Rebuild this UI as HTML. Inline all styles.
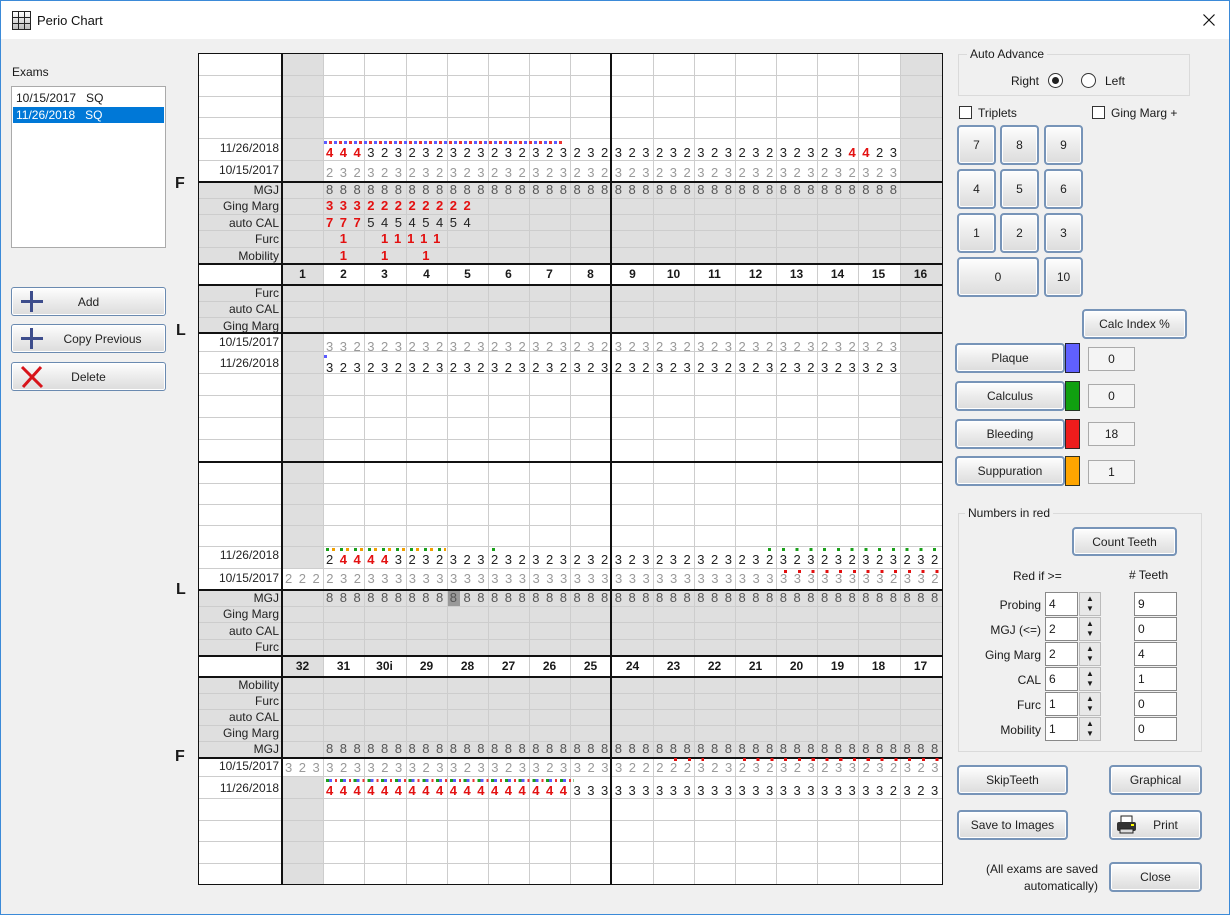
<!DOCTYPE html>
<html><head><meta charset="utf-8"><style>
*{margin:0;padding:0;box-sizing:border-box}
body{width:1230px;height:915px;background:#f0f0f0;position:relative;overflow:hidden;font-family:"Liberation Sans",sans-serif;font-size:12px;color:#1a1a1a;border:1px solid #3b8ad8}
div,span.a{position:absolute}
.tb{left:0;top:0;width:1228px;height:38px;background:#fff}
.g{background:#dfdfdf}
.w{background:#fff}
.h{height:1px;background:#cdcdcd;left:198px;width:743px}
.H{height:2px;background:#111;left:198px;width:743px}
.v{width:1px;background:#cdcdcd;top:53px;height:830px}
.V{width:2px;background:#111;top:53px;height:830px}
.lb{left:198px;width:80px;text-align:right;height:16px;line-height:16px;font-size:12px;color:#222}
.d{font-size:13px;letter-spacing:6.52px;white-space:nowrap;line-height:16px;height:16px;color:#222}
.d r{color:#e31010;font-weight:bold}
.d i{color:transparent;font-style:normal}
.o{color:#999}
.m{color:#555}
.tn{height:20px;line-height:20px;text-align:center;font-weight:bold;font-size:12px;width:41px}
.btn{border:1px solid #6a8ab0;border-radius:3px;background:linear-gradient(#fefefe,#ececec 50%,#dcdcdc);box-shadow:inset 0 0 0 1px #fff;display:flex;align-items:center;justify-content:center;font-size:12px;color:#222}
.np{border:2px solid #7794b8;border-radius:4px}
.box{background:#f4f4f4;border:1px solid #aaa;display:flex;align-items:center;justify-content:center;font-size:12px}
.tx{background:#fff;border:1px solid #888;padding-left:3px;font-size:12px;line-height:22px}
.grp{border:1px solid #dadada}
.gl{background:#f0f0f0;padding:0 3px;font-size:12px}
.dots{height:3px}
.sp{width:22px;height:24px;border:1px solid #bbb;background:#e8e8e8}
</style></head><body>
<div class="tb"></div>
<div style="left:11px;top:10px;width:19px;height:19px;background:#222"></div>
<div style="left:12px;top:11px;width:17px;height:17px;background:linear-gradient(90deg,transparent 5px,#222 5px 6px,transparent 6px 11px,#222 11px 12px,transparent 12px),linear-gradient(transparent 5px,#222 5px 6px,transparent 6px 11px,#222 11px 12px,transparent 12px),linear-gradient(#fff,#bbb)"></div>
<div style="left:36px;top:12px;font-size:13px;color:#111">Perio Chart</div>
<svg style="position:absolute;left:1202px;top:13px" width="12" height="12"><path d="M0.5 0.5 L11.5 11.5 M11.5 0.5 L0.5 11.5" stroke="#111" stroke-width="1.2" fill="none"/></svg>

<!-- left -->
<div style="left:11px;top:64px">Exams</div>
<div style="left:10px;top:85px;width:155px;height:162px;background:#fff;border:1px solid #aaa"></div>
<div style="left:15px;top:90px;line-height:15px">10/15/2017&nbsp;&nbsp;&nbsp;SQ</div>
<div style="left:12px;top:106px;width:151px;height:16px;background:#0078d7;color:#fff;padding-left:3px;line-height:16px">11/26/2018&nbsp;&nbsp;&nbsp;SQ</div>
<div class="btn" style="left:10px;top:286px;width:155px;height:29px">Add</div>
<div class="btn" style="left:10px;top:323px;width:155px;height:29px;padding-left:28px">Copy Previous</div>
<div class="btn" style="left:10px;top:361px;width:155px;height:29px">Delete</div>
<div style="left:20px;top:299px;width:22px;height:3px;background:#3d4d8c"></div><div style="left:29px;top:290px;width:3px;height:21px;background:#3d4d8c"></div>
<div style="left:20px;top:336px;width:22px;height:3px;background:#3d4d8c"></div><div style="left:29px;top:327px;width:3px;height:21px;background:#3d4d8c"></div>
<svg style="position:absolute;left:18px;top:364px" width="26" height="24"><path d="M3 2 L23 22 M22 2 L4 22" stroke="#d8141a" stroke-width="3" fill="none"/></svg>
<div style="left:174px;top:174px;font-weight:bold;font-size:16px">F</div>
<div style="left:175px;top:321px;font-weight:bold;font-size:16px">L</div>
<div style="left:175px;top:580px;font-weight:bold;font-size:16px">L</div>
<div style="left:174px;top:747px;font-weight:bold;font-size:16px">F</div>

<!-- grid bg -->
<div class="w" style="left:198px;top:53px;width:743px;height:830px"></div>
<div class="g" style="left:281px;top:53px;width:41px;height:128px"></div>
<div class="g" style="left:899px;top:53px;width:42px;height:128px"></div>
<div class="g" style="left:281px;top:331px;width:41px;height:130px"></div>
<div class="g" style="left:899px;top:331px;width:42px;height:130px"></div>
<div class="g" style="left:281px;top:461px;width:41px;height:106px"></div>
<div class="g" style="left:281px;top:775px;width:41px;height:108px"></div>
<div class="g" style="left:198px;top:181px;width:743px;height:81px"></div>
<div class="g" style="left:198px;top:284px;width:743px;height:47px"></div>
<div class="g" style="left:198px;top:589px;width:743px;height:65px"></div>
<div class="g" style="left:198px;top:676px;width:743px;height:80px"></div>
<div class="g" style="left:281px;top:263px;width:41px;height:20px"></div>
<div class="g" style="left:899px;top:263px;width:42px;height:20px"></div>
<div class="g" style="left:281px;top:655px;width:41px;height:20px"></div>
<div style="left:446px;top:589px;width:13px;height:16px;background:#999"></div>
<!-- thin horizontals -->
<div class="h" style="top:74px"></div><div class="h" style="top:95px"></div><div class="h" style="top:116px"></div><div class="h" style="top:137px"></div><div class="h" style="top:159px"></div>
<div class="h" style="top:197px"></div><div class="h" style="top:213px"></div><div class="h" style="top:229px"></div><div class="h" style="top:246px"></div>
<div class="h" style="top:300px"></div><div class="h" style="top:316px"></div>
<div class="h" style="top:350px"></div><div class="h" style="top:372px"></div><div class="h" style="top:394px"></div><div class="h" style="top:416px"></div><div class="h" style="top:438px"></div>
<div class="h" style="top:482px"></div><div class="h" style="top:503px"></div><div class="h" style="top:524px"></div><div class="h" style="top:545px"></div><div class="h" style="top:567px"></div>
<div class="h" style="top:605px"></div><div class="h" style="top:621px"></div><div class="h" style="top:638px"></div>
<div class="h" style="top:692px"></div><div class="h" style="top:708px"></div><div class="h" style="top:724px"></div><div class="h" style="top:740px"></div>
<div class="h" style="top:775px"></div><div class="h" style="top:797px"></div><div class="h" style="top:819px"></div><div class="h" style="top:840px"></div><div class="h" style="top:862px"></div>
<!-- thin verticals -->
<div class="v" style="left:322px"></div><div class="v" style="left:363px"></div><div class="v" style="left:405px"></div><div class="v" style="left:446px"></div><div class="v" style="left:487px"></div><div class="v" style="left:528px"></div><div class="v" style="left:569px"></div>
<div class="v" style="left:652px"></div><div class="v" style="left:693px"></div><div class="v" style="left:734px"></div><div class="v" style="left:775px"></div><div class="v" style="left:816px"></div><div class="v" style="left:857px"></div><div class="v" style="left:899px"></div>
<!-- thick -->
<div class="H" style="top:180px"></div><div class="H" style="top:262px"></div><div class="H" style="top:283px"></div><div class="H" style="top:331px"></div><div class="H" style="top:460px"></div>
<div class="H" style="top:588px"></div><div class="H" style="top:654px"></div><div class="H" style="top:675px"></div><div class="H" style="top:756px"></div>
<div class="V" style="left:280px"></div><div class="V" style="left:609px"></div>
<div style="left:197px;top:52px;width:745px;height:832px;border:1px solid #111"></div>

<!-- labels -->
<div class="lb" style="top:139px">11/26/2018</div>
<div class="lb" style="top:161px">10/15/2017</div>
<div class="lb" style="top:181px">MGJ</div>
<div class="lb" style="top:197px">Ging Marg</div>
<div class="lb" style="top:214px">auto CAL</div>
<div class="lb" style="top:230px">Furc</div>
<div class="lb" style="top:247px">Mobility</div>
<div class="lb" style="top:284px">Furc</div>
<div class="lb" style="top:300px">auto CAL</div>
<div class="lb" style="top:317px;height:14px;overflow:hidden">Ging Marg</div>
<div class="lb" style="top:333px">10/15/2017</div>
<div class="lb" style="top:354px">11/26/2018</div>
<div class="lb" style="top:546px">11/26/2018</div>
<div class="lb" style="top:569px">10/15/2017</div>
<div class="lb" style="top:589px">MGJ</div>
<div class="lb" style="top:605px">Ging Marg</div>
<div class="lb" style="top:622px">auto CAL</div>
<div class="lb" style="top:638px">Furc</div>
<div class="lb" style="top:676px">Mobility</div>
<div class="lb" style="top:692px">Furc</div>
<div class="lb" style="top:708px">auto CAL</div>
<div class="lb" style="top:724px">Ging Marg</div>
<div class="lb" style="top:740px">MGJ</div>
<div class="lb" style="top:757px">10/15/2017</div>
<div class="lb" style="top:779px">11/26/2018</div>

<!-- tooth numbers -->
<div class="tn" style="left:281px;top:263px">1</div><div class="tn" style="left:322px;top:263px">2</div><div class="tn" style="left:363px;top:263px">3</div><div class="tn" style="left:405px;top:263px">4</div><div class="tn" style="left:446px;top:263px">5</div><div class="tn" style="left:487px;top:263px">6</div><div class="tn" style="left:528px;top:263px">7</div><div class="tn" style="left:569px;top:263px">8</div><div class="tn" style="left:611px;top:263px">9</div><div class="tn" style="left:652px;top:263px">10</div><div class="tn" style="left:693px;top:263px">11</div><div class="tn" style="left:734px;top:263px">12</div><div class="tn" style="left:775px;top:263px">13</div><div class="tn" style="left:816px;top:263px">14</div><div class="tn" style="left:857px;top:263px">15</div><div class="tn" style="left:899px;top:263px">16</div>
<div class="tn" style="left:281px;top:655px">32</div><div class="tn" style="left:322px;top:655px">31</div><div class="tn" style="left:363px;top:655px">30i</div><div class="tn" style="left:405px;top:655px">29</div><div class="tn" style="left:446px;top:655px">28</div><div class="tn" style="left:487px;top:655px">27</div><div class="tn" style="left:528px;top:655px">26</div><div class="tn" style="left:569px;top:655px">25</div><div class="tn" style="left:611px;top:655px">24</div><div class="tn" style="left:652px;top:655px">23</div><div class="tn" style="left:693px;top:655px">22</div><div class="tn" style="left:734px;top:655px">21</div><div class="tn" style="left:775px;top:655px">20</div><div class="tn" style="left:816px;top:655px">19</div><div class="tn" style="left:857px;top:655px">18</div><div class="tn" style="left:899px;top:655px">17</div>

<!-- dots -->
<div class="dots" style="left:323px;top:140px;width:238px;background:repeating-linear-gradient(90deg,#5a5aff 0 3px,transparent 3px 5px,#e33 5px 8px,transparent 8px 10px)"></div>
<div class="dots" style="left:323px;top:354px;width:3px;background:#5a5aff"></div>
<div class="dots" style="left:325px;top:547px;width:120px;background:repeating-linear-gradient(90deg,#19a019 0 3px,transparent 3px 6px,#f0a000 6px 9px,transparent 9px 14px)"></div>
<div class="dots" style="left:491px;top:547px;width:3px;background:#19a019"></div>
<div class="dots" style="left:767px;top:547px;width:173px;background:repeating-linear-gradient(90deg,#19a019 0 3px,transparent 3px 13.75px)"></div>
<div class="dots" style="left:783px;top:569px;width:157px;background:repeating-linear-gradient(90deg,#e31010 0 3px,transparent 3px 13.75px)"></div>
<div class="dots" style="left:673px;top:757px;width:30px;background:repeating-linear-gradient(90deg,#e31010 0 3px,transparent 3px 13.75px)"></div>
<div class="dots" style="left:742px;top:757px;width:198px;background:repeating-linear-gradient(90deg,#e31010 0 3px,transparent 3px 13.75px)"></div>
<div class="dots" style="left:325px;top:778px;width:248px;background:repeating-linear-gradient(90deg,#19a019 0 3px,#5a5aff 3px 6px,transparent 6px 9px,#e33 9px 11px,transparent 11px 13.75px)"></div>

<!-- data -->
<div class="d" style="left:325px;top:144px"><r>444</r>32323232323232323232323232323232323<r>44</r>23</div>
<div class="d o" style="left:325px;top:164px">232323232323232323232323232323232323232323</div>
<div class="d m" style="left:325px;top:181px">888888888888888888888888888888888888888888</div>
<div class="d" style="left:325px;top:197px"><r>33322222222</r></div>
<div class="d" style="left:325px;top:214px"><r>777</r>54545454</div>
<div class="d" style="left:325px;top:230px"><i>0</i><r>1</r><i>00</i><r>11111</r></div>
<div class="d" style="left:325px;top:247px"><i>0</i><r>1</r><i>00</i><r>1</r><i>00</i><r>1</r></div>
<div class="d o" style="left:325px;top:338px">332323232323232323232323232323232323232323</div>
<div class="d" style="left:325px;top:359px">323232323232323232323232323232323232323323</div>
<div class="d" style="left:325px;top:551px">2<r>4444</r>3232323232323232323232323232323232323232</div>
<div class="d o" style="left:284px;top:570px">222232333333333333333333333333333333333333332332</div>
<div class="d m" style="left:325px;top:589px">888888888888888888888888888888888888888888888</div>
<div class="d m" style="left:325px;top:740px">888888888888888888888888888888888888888888888</div>
<div class="d o" style="left:284px;top:759px">323323323323323323323323322222323232323233232323</div>
<div class="d" style="left:325px;top:782px"><r>444444444444444444</r>333333333333333333333332323</div>

<!-- right panel -->
<div class="grp" style="left:957px;top:53px;width:232px;height:42px"></div>
<div class="gl" style="left:966px;top:46px">Auto Advance</div>
<div style="left:1010px;top:73px">Right</div>
<div style="left:1047px;top:72px;width:15px;height:15px;border:1px solid #333;border-radius:50%;background:#fff"></div>
<div style="left:1051px;top:76px;width:7px;height:7px;border-radius:50%;background:#222"></div>
<div style="left:1080px;top:72px;width:15px;height:15px;border:1px solid #333;border-radius:50%;background:#fff"></div>
<div style="left:1104px;top:73px">Left</div>
<div style="left:958px;top:105px;width:13px;height:13px;border:1px solid #333;background:#fff"></div>
<div style="left:977px;top:105px">Triplets</div>
<div style="left:1091px;top:105px;width:13px;height:13px;border:1px solid #333;background:#fff"></div>
<div style="left:1110px;top:105px">Ging Marg +</div>
<div class="btn np" style="left:956px;top:124px;width:39px;height:40px">7</div>
<div class="btn np" style="left:999px;top:124px;width:39px;height:40px">8</div>
<div class="btn np" style="left:1043px;top:124px;width:39px;height:40px">9</div>
<div class="btn np" style="left:956px;top:168px;width:39px;height:40px">4</div>
<div class="btn np" style="left:999px;top:168px;width:39px;height:40px">5</div>
<div class="btn np" style="left:1043px;top:168px;width:39px;height:40px">6</div>
<div class="btn np" style="left:956px;top:212px;width:39px;height:40px">1</div>
<div class="btn np" style="left:999px;top:212px;width:39px;height:40px">2</div>
<div class="btn np" style="left:1043px;top:212px;width:39px;height:40px">3</div>
<div class="btn np" style="left:956px;top:256px;width:82px;height:40px">0</div>
<div class="btn np" style="left:1043px;top:256px;width:39px;height:40px">10</div>
<div class="btn np" style="left:1081px;top:308px;width:105px;height:30px">Calc Index %</div>
<div class="btn np" style="left:954px;top:342px;width:110px;height:30px">Plaque</div>
<div style="left:1064px;top:342px;width:15px;height:30px;background:#6060ff;border:1px solid #223"></div>
<div class="box" style="left:1087px;top:346px;width:47px;height:24px">0</div>
<div class="btn np" style="left:954px;top:380px;width:110px;height:30px">Calculus</div>
<div style="left:1064px;top:380px;width:15px;height:30px;background:#10a010;border:1px solid #232"></div>
<div class="box" style="left:1087px;top:383px;width:47px;height:24px">0</div>
<div class="btn np" style="left:954px;top:418px;width:110px;height:30px">Bleeding</div>
<div style="left:1064px;top:418px;width:15px;height:30px;background:#ee1c1c;border:1px solid #322"></div>
<div class="box" style="left:1087px;top:421px;width:47px;height:24px">18</div>
<div class="btn np" style="left:954px;top:455px;width:110px;height:30px">Suppuration</div>
<div style="left:1064px;top:455px;width:15px;height:30px;background:#ffa500;border:1px solid #332"></div>
<div class="box" style="left:1087px;top:459px;width:47px;height:24px">1</div>

<div class="grp" style="left:957px;top:512px;width:244px;height:239px"></div>
<div class="gl" style="left:964px;top:505px">Numbers in red</div>
<div class="btn np" style="left:1071px;top:526px;width:105px;height:29px">Count Teeth</div>
<div style="left:1012px;top:568px">Red if &gt;=</div>
<div style="left:1128px;top:567px"># Teeth</div>
<div style="left:960px;top:597px;width:80px;text-align:right">Probing</div>
<div style="left:960px;top:622px;width:80px;text-align:right">MGJ (&lt;=)</div>
<div style="left:960px;top:647px;width:80px;text-align:right">Ging Marg</div>
<div style="left:960px;top:672px;width:80px;text-align:right">CAL</div>
<div style="left:960px;top:697px;width:80px;text-align:right">Furc</div>
<div style="left:960px;top:722px;width:80px;text-align:right">Mobility</div>
<div class="tx" style="left:1044px;top:591px;width:33px;height:24px">4</div>
<div class="tx" style="left:1044px;top:616px;width:33px;height:24px">2</div>
<div class="tx" style="left:1044px;top:641px;width:33px;height:24px">2</div>
<div class="tx" style="left:1044px;top:666px;width:33px;height:24px">6</div>
<div class="tx" style="left:1044px;top:691px;width:33px;height:24px">1</div>
<div class="tx" style="left:1044px;top:716px;width:33px;height:24px">1</div>
<div class="sp" style="left:1078px;top:591px"></div><div class="sp" style="left:1078px;top:616px"></div><div class="sp" style="left:1078px;top:641px"></div><div class="sp" style="left:1078px;top:666px"></div><div class="sp" style="left:1078px;top:691px"></div><div class="sp" style="left:1078px;top:716px"></div>
<div style="left:1085px;top:593px;font-size:8px;line-height:10px">▲<br>▼</div><div style="left:1085px;top:618px;font-size:8px;line-height:10px">▲<br>▼</div><div style="left:1085px;top:643px;font-size:8px;line-height:10px">▲<br>▼</div><div style="left:1085px;top:668px;font-size:8px;line-height:10px">▲<br>▼</div><div style="left:1085px;top:693px;font-size:8px;line-height:10px">▲<br>▼</div><div style="left:1085px;top:718px;font-size:8px;line-height:10px">▲<br>▼</div>
<div class="tx" style="left:1133px;top:591px;width:43px;height:24px">9</div>
<div class="tx" style="left:1133px;top:616px;width:43px;height:24px">0</div>
<div class="tx" style="left:1133px;top:641px;width:43px;height:24px">4</div>
<div class="tx" style="left:1133px;top:666px;width:43px;height:24px">1</div>
<div class="tx" style="left:1133px;top:691px;width:43px;height:24px">0</div>
<div class="tx" style="left:1133px;top:716px;width:43px;height:24px">0</div>

<div class="btn np" style="left:956px;top:764px;width:111px;height:30px">SkipTeeth</div>
<div class="btn np" style="left:1108px;top:764px;width:93px;height:30px">Graphical</div>
<div class="btn np" style="left:956px;top:809px;width:111px;height:30px">Save to Images</div>
<div class="btn np" style="left:1108px;top:809px;width:93px;height:30px;padding-left:20px">Print</div>
<svg style="position:absolute;left:1115px;top:814px" width="22" height="20"><rect x="5" y="1" width="11" height="7" fill="#fff" stroke="#222"/><rect x="1" y="7" width="19" height="9" rx="2" fill="#333"/><rect x="4" y="14" width="13" height="4" fill="#ddd" stroke="#222"/><rect x="15" y="9" width="3" height="2" fill="#ff0"/></svg>
<div style="left:960px;top:860px;width:137px;text-align:right;line-height:17px">(All exams are saved<br>automatically)</div>
<div class="btn np" style="left:1108px;top:861px;width:93px;height:30px">Close</div>
</body></html>
